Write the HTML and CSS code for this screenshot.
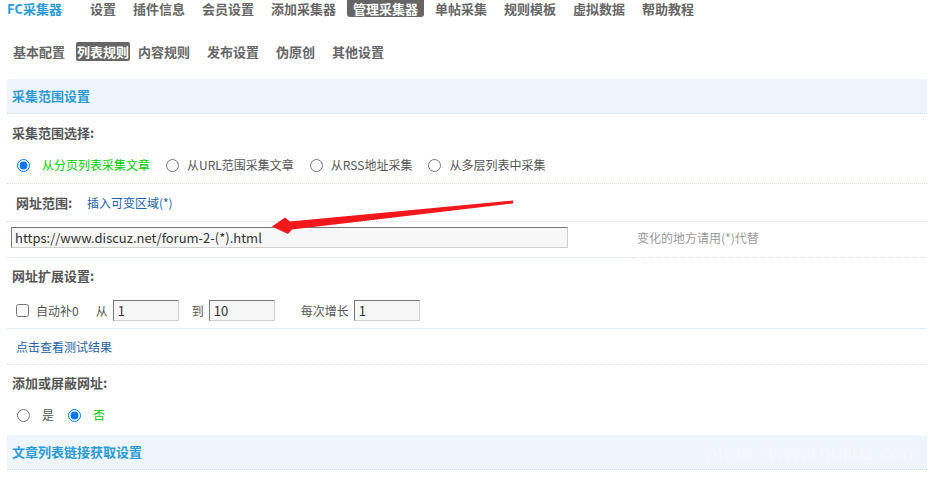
FILE: index.html
```html
<!DOCTYPE html>
<html lang="zh-CN">
<head>
<meta charset="utf-8">
<title>FC采集器 - 列表规则</title>
<link rel="stylesheet" href="styles.css">
</head>
<body>
<div class="page">
  <div class="topnav">
    <span class="logo">FC采集器</span>
    <a class="nav">设置</a>
    <a class="nav">插件信息</a>
    <a class="nav">会员设置</a>
    <a class="nav">添加采集器</a>
    <a class="nav on">管理采集器</a>
    <a class="nav">单帖采集</a>
    <a class="nav">规则模板</a>
    <a class="nav">虚拟数据</a>
    <a class="nav">帮助教程</a>
  </div>
  <div class="subnav">
    <a class="sub">基本配置</a>
    <a class="sub on">列表规则</a>
    <a class="sub">内容规则</a>
    <a class="sub">发布设置</a>
    <a class="sub">伪原创</a>
    <a class="sub">其他设置</a>
  </div>

  <div class="section-head">采集范围设置</div>

  <div class="group b-dot g1">
    <div class="title">采集范围选择:</div>
    <div class="opts">
      <label class="opt"><input type="radio" name="scope" checked><span class="green">从分页列表采集文章</span></label>
      <label class="opt"><input type="radio" name="scope"><span>从URL范围采集文章</span></label>
      <label class="opt"><input type="radio" name="scope"><span>从RSS地址采集</span></label>
      <label class="opt"><input type="radio" name="scope"><span>从多层列表中采集</span></label>
    </div>
  </div>

  <div class="row b-dot urlhead">
    <span class="label">网址范围:</span>
    <a class="link">插入可变区域(*)</a>
  </div>

  <div class="urlrow">
    <div class="cell-left"><input class="url" type="text" value="https://www.discuz.net/forum-2-(*).html"></div>
    <div class="cell-right">变化的地方请用(*)代替</div>
  </div>

  <div class="group b-solid g2">
    <div class="title">网址扩展设置:</div>
    <div class="ext">
      <label class="chk"><input type="checkbox"><span>自动补0</span></label>
      <span class="t from">从</span><input class="num" type="text" value="1">
      <span class="t to">到</span><input class="num" type="text" value="10">
      <span class="t step">每次增长</span><input class="num" type="text" value="1">
    </div>
  </div>

  <div class="row b-dot testrow">
    <a class="link">点击查看测试结果</a>
  </div>

  <div class="group g3">
    <div class="title">添加或屏蔽网址:</div>
    <div class="opts">
      <label class="opt yes"><input type="radio" name="add"><span>是</span></label>
      <label class="opt"><input type="radio" name="add" checked><span class="green">否</span></label>
    </div>
  </div>

  <div class="section-head">文章列表链接获取设置</div>

  <span class="watermark">https://www.huiluz.com</span>

  <svg class="arrow" width="934" height="478" viewBox="0 0 934 478">
    <polygon points="272,226.5 285,217.5 290,221.5 513,200.5 513,203.5 292,229.5 288,234" fill="#f2181c"/>
  </svg>
</div>
</body>
</html>
```

FILE: styles.css
```css
html, body {
  margin: 0;
  padding: 0;
  background: #fff;
}

.page {
  position: relative;
  width: 934px;
  height: 478px;
  padding: 0 7px;
  box-sizing: border-box;
  overflow: hidden;
  font-family: "Noto Sans CJK SC", "Noto Sans", sans-serif;
  font-size: 12px;
  color: #555;
}

/* top navigation */
.topnav {
  display: flex;
  align-items: center;
  gap: 5px;
  height: 17px;
  line-height: 17px;
}
.logo {
  color: #2b9bd8;
  font-size: 13px;
  font-weight: bold;
  margin-right: 17px;
}
.nav {
  padding: 0 6px;
  font-size: 13px;
  font-weight: bold;
  color: #666;
  white-space: nowrap;
}
.nav.on {
  background: #666;
  color: #fff;
  border-radius: 0 0 3px 3px;
}

/* sub navigation */
.subnav {
  display: flex;
  align-items: center;
  gap: 5px;
  margin-top: 25px;
  height: 19px;
  line-height: 19px;
}
.sub {
  padding: 0 6px;
  font-size: 13px;
  font-weight: bold;
  color: #666;
  white-space: nowrap;
}
.sub.on {
  padding: 0 1px;
  margin-right: -3px;
  background: #666;
  color: #fff;
  border-radius: 2px;
}

/* section header */
.section-head {
  height: 34px;
  line-height: 34px;
  padding-left: 5px;
  background: #eef5fc;
  color: #2b9bd8;
  font-size: 13px;
  font-weight: bold;
  border-bottom: 1px dotted #d3dde8;
}
.subnav + .section-head {
  margin-top: 18px;
}

.b-dot { border-bottom: 1px dotted #d6e0ea; }
.b-solid { border-bottom: 1px solid #deebf8; }

.group {
  padding-left: 5px;
  line-height: 18px;
}
.title {
  font-size: 13px;
  font-weight: bold;
  color: #555;
}
.g1 { padding-top: 10px; padding-bottom: 9px; }
.g2 { padding-top: 9px; padding-bottom: 7px; }
.g3 { padding-top: 9px; padding-bottom: 11px; }

.opts {
  display: flex;
  align-items: center;
  margin-top: 14px;
  height: 18px;
}
.opt {
  display: flex;
  align-items: center;
  margin-right: 11px;
  color: #555;
}
.opt input {
  margin: 0 0 0 5px;
  width: 13px;
  height: 13px;
}
.opt span { margin-left: 8px; }
.opt:first-child span { margin-left: 12px; }
.g3 .opt span { margin-left: 12px; }
.opt.yes { margin-right: 9px; }
.green { color: #0c0; }

.row {
  padding-left: 9px;
  line-height: 18px;
}
.urlhead { padding-top: 10px; padding-bottom: 9px; }
.urlhead .label {
  font-size: 13px;
  font-weight: bold;
  color: #555;
  margin-right: 12px;
}
.testrow { padding-top: 9px; padding-bottom: 8px; }
.link {
  color: #2262a8;
}

/* url row */
.urlrow {
  display: flex;
}
.cell-left {
  width: 626px;
  padding: 5px 0 9px 4px;
  box-sizing: border-box;
  border-bottom: 1px solid #deebf8;
}
.cell-right {
  flex: 1;
  padding-left: 4px;
  display: flex;
  align-items: center;
  padding-bottom: 4px;
  color: #999;
  border-bottom: 1px dotted #d6e0ea;
}
.url, .num {
  display: block;
  height: 21px;
  box-sizing: border-box;
  margin: 0;
  padding: 0 3px;
  border: 1px solid;
  border-color: #767676 #cfcfcf #cfcfcf #767676;
  background: #f7f7f7;
  color: #333;
  font-family: "Noto Sans CJK SC", "Noto Sans", sans-serif;
  font-size: 13px;
  outline: none;
}
.url { width: 557px; }
.num { width: 66px; padding-left: 4px; }

/* extension row */
.ext {
  display: flex;
  align-items: center;
  margin-top: 15px;
  height: 21px;
}
.chk {
  display: flex;
  align-items: center;
}
.chk input {
  margin: 0 0 0 4px;
  width: 13px;
  height: 13px;
}
.chk span { margin-left: 7px; }
.t { color: #555; }
.from { margin-left: 17px; margin-right: 5px; }
.to { margin-left: 13px; margin-right: 5px; }
.step { margin-left: 26px; margin-right: 5px; }

.watermark {
  position: absolute;
  left: 706px;
  top: 441px;
  font-family: "Liberation Sans", sans-serif;
  font-size: 21px;
  color: rgba(255, 255, 255, 0.35);
  pointer-events: none;
}

.arrow {
  position: absolute;
  left: 0;
  top: 0;
  pointer-events: none;
}
```
